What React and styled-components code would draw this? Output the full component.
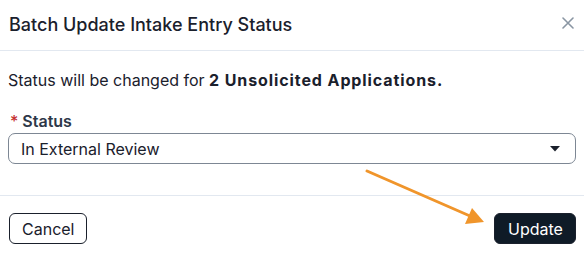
import React from 'react'
import styled, { createGlobalStyle } from 'styled-components'

const GlobalStyle = createGlobalStyle`
  body {
    margin: 0;
    background: #fff;
    font-family: Inter, "Liberation Sans", sans-serif;
    color: #1a202c;
  }
`

const App = () => {
  return (
    <Dialog>
      <GlobalStyle />
      <Header>
        <Title>Batch Update Intake Entry Status</Title>
        <CloseButton aria-label="Close">
          <svg width="12" height="12" viewBox="0 0 12 12">
            <path d="M1 1L11 11M11 1L1 11" stroke="#8a96a3" strokeWidth="1.6" strokeLinecap="round" />
          </svg>
        </CloseButton>
      </Header>

      <Body>
        <Message>
          Status will be changed for <strong>2 Unsolicited Applications.</strong>
        </Message>
        <Field>
          <Label><span>*</span>Status</Label>
          <Select>
            <span>In External Review</span>
            <svg width="10" height="6" viewBox="0 0 10 6">
              <path d="M0 0H10L5 5.5Z" fill="#1a202c" />
            </svg>
          </Select>
        </Field>
      </Body>

      <Footer>
        <Button>Cancel</Button>
        <Button primary>Update</Button>
      </Footer>

      <Arrow width="584" height="255" viewBox="0 0 584 255">
        <line x1="367" y1="171" x2="470" y2="216" stroke="#f0952b" strokeWidth="3" strokeLinecap="round" />
        <path d="M484 222L465 224L472 208Z" fill="#f0952b" />
      </Arrow>
    </Dialog>
  )
}

const Dialog = styled.div`
  position: relative;
  width: 584px;
  height: 255px;
  background: #fff;
  overflow: hidden;
`

const Header = styled.div`
  height: 51px;
  box-sizing: border-box;
  display: flex;
  align-items: center;
  justify-content: space-between;
  padding: 0 10px 2px 9px;
  border-bottom: 1px solid #e2e8f0;
`

const Title = styled.h2`
  margin: 0;
  font-size: 18px;
  font-weight: 500;
  color: #1a202c;
`

const CloseButton = styled.button`
  border: none;
  background: none;
  padding: 0;
  margin-bottom: 3px;
  display: flex;
  width: 12px;
  height: 12px;
`

const Body = styled.div`
  padding: 19px 8px 0 8px;
  height: 145px;
  box-sizing: border-box;
  border-bottom: 1px solid #e2e8f0;
`

const Message = styled.p`
  margin: 0 0 20px 0;
  font-size: 16px;
  line-height: 21px;
  color: #1a202c;

  strong {
    font-weight: 700;
    letter-spacing: 0.9px;
  }
`

const Field = styled.div`
  display: flex;
  flex-direction: column;
  gap: 2px;
`

const Label = styled.label`
  font-size: 16px;
  line-height: 20px;
  font-weight: 600;
  color: #2d3748;
  padding-left: 2px;

  span {
    color: #c53030;
    margin-right: 4px;
    font-weight: 500;
  }
`

const Select = styled.div`
  height: 31px;
  box-sizing: border-box;
  border: 1px solid #7d8794;
  border-radius: 7px;
  display: flex;
  align-items: center;
  justify-content: space-between;
  padding: 0 15px 0 12px;
  font-size: 16px;
  color: #1a202c;
`

const Footer = styled.div`
  display: flex;
  justify-content: space-between;
  align-items: center;
  padding: 17px 8px 0 9px;
`

const Button = styled.button`
  height: 31px;
  box-sizing: border-box;
  padding: 0 ${p => (p.primary ? '13px' : '12px')};
  border-radius: 6px;
  font-family: Inter, "Liberation Sans", sans-serif;
  font-size: 16px;
  border: 1px solid #1a202c;
  background: ${p => (p.primary ? '#0f1b27' : '#fff')};
  color: ${p => (p.primary ? '#fff' : '#1a202c')};
  width: ${p => (p.primary ? '82px' : '78px')};
`

const Arrow = styled.svg`
  position: absolute;
  left: 0;
  top: 0;
  pointer-events: none;
`

export default App
